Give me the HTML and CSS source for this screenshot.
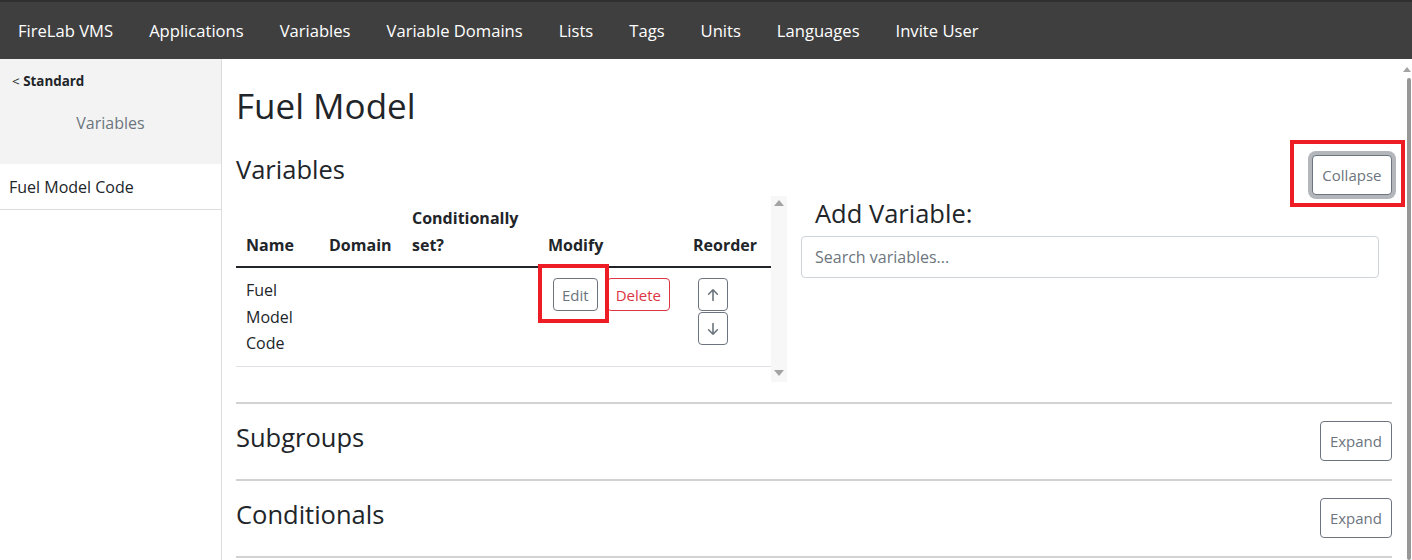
FILE: index.html
```html
<!DOCTYPE html>
<html>
<head>
<meta charset="utf-8">
<title>FireLab VMS</title>
<link rel="stylesheet" href="styles.css">
</head>
<body>
<nav class="topnav">
  <a href="#">FireLab VMS</a>
  <a href="#">Applications</a>
  <a href="#">Variables</a>
  <a href="#">Variable Domains</a>
  <a href="#">Lists</a>
  <a href="#">Tags</a>
  <a href="#">Units</a>
  <a href="#">Languages</a>
  <a href="#">Invite User</a>
</nav>
<div class="layout">
  <aside class="sidebar">
    <div class="side-top">
      <div class="back"><span class="lt">&lt;</span> Standard</div>
      <div class="side-title">Variables</div>
    </div>
    <div class="side-item">Fuel Model Code</div>
  </aside>
  <main class="content">
    <h1 class="page-title">Fuel Model</h1>
    <div class="sec-head">
      <h3 class="sec-title">Variables</h3>
      <span class="annot annot-collapse"><button class="btn btn-focus">Collapse</button></span>
    </div>
    <div class="var-body">
      <div class="table-wrap">
        <table class="vtable">
          <thead>
            <tr>
              <th class="c-name">Name</th>
              <th class="c-domain">Domain</th>
              <th class="c-cond">Conditionally set?</th>
              <th class="c-mod">Modify</th>
              <th class="c-reo">Reorder</th>
            </tr>
          </thead>
          <tbody>
            <tr>
              <td class="c-name">Fuel Model Code</td>
              <td></td>
              <td></td>
              <td class="c-mod">
                <div class="mod-btns">
                  <span class="annot annot-edit"><button class="btn btn-sm">Edit</button></span>
                  <button class="btn btn-sm btn-danger">Delete</button>
                </div>
              </td>
              <td class="c-reo">
                <div class="reo-btns">
                  <button class="btn btn-arrow"><svg viewBox="0 0 14 14" width="14" height="14"><path d="M7 12.5V1.8M2.6 6.2L7 1.8l4.4 4.4" fill="none" stroke="currentColor" stroke-width="1.6" stroke-linecap="round" stroke-linejoin="round"/></svg></button>
                  <button class="btn btn-arrow"><svg viewBox="0 0 14 14" width="14" height="14"><path d="M7 1.5v10.7M2.6 7.8L7 12.2l4.4-4.4" fill="none" stroke="currentColor" stroke-width="1.6" stroke-linecap="round" stroke-linejoin="round"/></svg></button>
                </div>
              </td>
            </tr>
          </tbody>
        </table>
        <div class="tscroll">
          <span class="tri tri-up"></span>
          <span class="tri tri-down"></span>
        </div>
      </div>
      <div class="add-col">
        <h3 class="add-title">Add Variable:</h3>
        <input class="search" type="text" placeholder="Search variables...">
      </div>
    </div>
    <div class="section">
      <h3 class="sec-title">Subgroups</h3>
      <button class="btn">Expand</button>
    </div>
    <div class="section">
      <h3 class="sec-title">Conditionals</h3>
      <button class="btn">Expand</button>
    </div>
    <div class="section last"></div>
  </main>
  <div class="vscroll">
    <span class="tri tri-up small"></span>
    <div class="thumb"></div>
  </div>
</div>
</body>
</html>
```
FILE: styles.css
```css
* { box-sizing: border-box; }
html, body { margin: 0; padding: 0; }
body {
  font-family: "Open Sans", "Noto Sans", "Liberation Sans", sans-serif;
  color: #212529;
  background: #fff;
  height: 560px;
  overflow: hidden;
}
.topnav {
  height: 59px;
  background: #3f3f3f;
  border-top: 2px solid #2f2f2f;
  display: flex;
  align-items: center;
}
.topnav a {
  color: #fff;
  text-decoration: none;
  font-size: 16.6px;
  padding: 0 18px;
}
.layout { display: flex; height: 501px; }
.sidebar {
  width: 222px;
  flex-shrink: 0;
  border-right: 1px solid #dcdcdc;
}
.side-top {
  background: #f3f3f3;
  height: 105px;
  padding: 13px 12px 0;
}
.back { font-size: 13.4px; font-weight: 700; line-height: 18px; }
.back .lt { font-weight: 400; }
.side-title {
  text-align: center;
  color: #6c757d;
  font-size: 16px;
  margin-top: 22px;
}
.side-item {
  height: 46px;
  border-bottom: 1px solid #dcdcdc;
  padding: 0 9px;
  display: flex;
  align-items: center;
  font-size: 16px;
}
.content { flex: 1; min-width: 0; padding: 0 4px 0 14px; }
.page-title {
  font-size: 35px;
  font-weight: 500;
  line-height: 44px;
  margin: 25px 0 24px;
}
.sec-head {
  display: flex;
  justify-content: space-between;
  align-items: flex-start;
  height: 44px;
}
.sec-title {
  font-size: 25.5px;
  font-weight: 500;
  line-height: 34px;
  margin: 0;
}
.btn {
  font-family: inherit;
  font-size: 15px;
  line-height: 24px;
  padding: 7px 9px;
  border: 1px solid #6c757d;
  color: #6c757d;
  background: #fff;
  border-radius: 4px;
  display: block;
}
.btn-focus {
  box-shadow: 0 0 0 4px #b3b7bb;
  margin: 3px 0 0 0;
  padding: 7px 9.5px;
}
.btn-sm { font-size: 15px; line-height: 22px; padding: 4.5px 8px; }
.btn-danger { border-color: #dc3545; color: #dc3545; }
.annot { position: relative; display: inline-block; }
.annot::after {
  content: "";
  position: absolute;
  border: 4px solid #ee1c25;
  pointer-events: none;
}
.annot-collapse::after { left: -22px; right: -13px; top: -12px; bottom: -12px; }
.annot-edit::after { left: -15px; right: -11px; top: -14px; bottom: -12px; }
.var-body { display: flex; align-items: flex-start; }
.table-wrap {
  display: flex;
  width: 551px;
  height: 186px;
  overflow: hidden;
}
.vtable {
  width: 535px;
  border-collapse: collapse;
  table-layout: fixed;
  font-size: 16px;
  line-height: 26.5px;
  align-self: flex-start;
}
.vtable th, .vtable td {
  padding: 8px;
  text-align: left;
  vertical-align: bottom;
}
.vtable th { font-weight: 700; border-bottom: 2px solid #212529; padding-top: 9px; }
.vtable td { vertical-align: top; border-bottom: 1px solid #dee2e6; padding-top: 9px; padding-bottom: 9px; }
.vtable .c-name { width: 85px; padding-left: 10px; }
.vtable .c-domain { width: 83px; }
.vtable .c-cond { width: 136px; }
.vtable .c-mod { width: 145px; }
.vtable td.c-mod, .vtable td.c-reo { padding-top: 10px; }
.mod-btns { display: flex; gap: 9px; padding-left: 5px; }
.reo-btns { display: flex; flex-direction: column; gap: 1px; padding-left: 5px; align-items: flex-start; }
.btn-arrow {
  padding: 0;
  width: 30px;
  height: 33px;
  display: flex;
  align-items: center;
  justify-content: center;
}
.tscroll {
  width: 16px;
  height: 186px;
  background: #f7f7f7;
  display: flex;
  flex-direction: column;
  justify-content: space-between;
  align-items: center;
  padding: 4px 0 6px;
}
.tri { width: 0; height: 0; display: block; }
.tri-up { border-left: 5px solid transparent; border-right: 5px solid transparent; border-bottom: 6px solid #a3a3a3; }
.tri-down { border-left: 5px solid transparent; border-right: 5px solid transparent; border-top: 6px solid #a3a3a3; }
.add-col { margin-left: 14px; width: 578px; }
.add-title {
  font-size: 25.5px;
  font-weight: 500;
  line-height: 34px;
  margin: 0 0 6px 14px;
}
.search {
  width: 578px;
  height: 42px;
  border: 1px solid #ced4da;
  border-radius: 4px;
  padding: 0 13px;
  font-family: inherit;
  font-size: 16px;
  color: #212529;
}
.search::placeholder { color: #6c757d; }
.section {
  border-top: 2px solid #d2d2d2;
  height: 77px;
  display: flex;
  align-items: flex-start;
  justify-content: space-between;
  padding-top: 16px;
}
.section .btn { margin-top: 1px; }
.var-body + .section { margin-top: 20px; }
.section.last { height: 10px; }
.vscroll {
  width: 16px;
  flex-shrink: 0;
  display: flex;
  flex-direction: column;
  align-items: flex-end;
  padding: 8px 1px 0 0;
}
.tri.small { border-left-width: 4px; border-right-width: 4px; border-bottom-width: 5px; }
.thumb { width: 4px; flex: 1; background: #979797; margin-top: 6px; border-radius: 2px; }
```
